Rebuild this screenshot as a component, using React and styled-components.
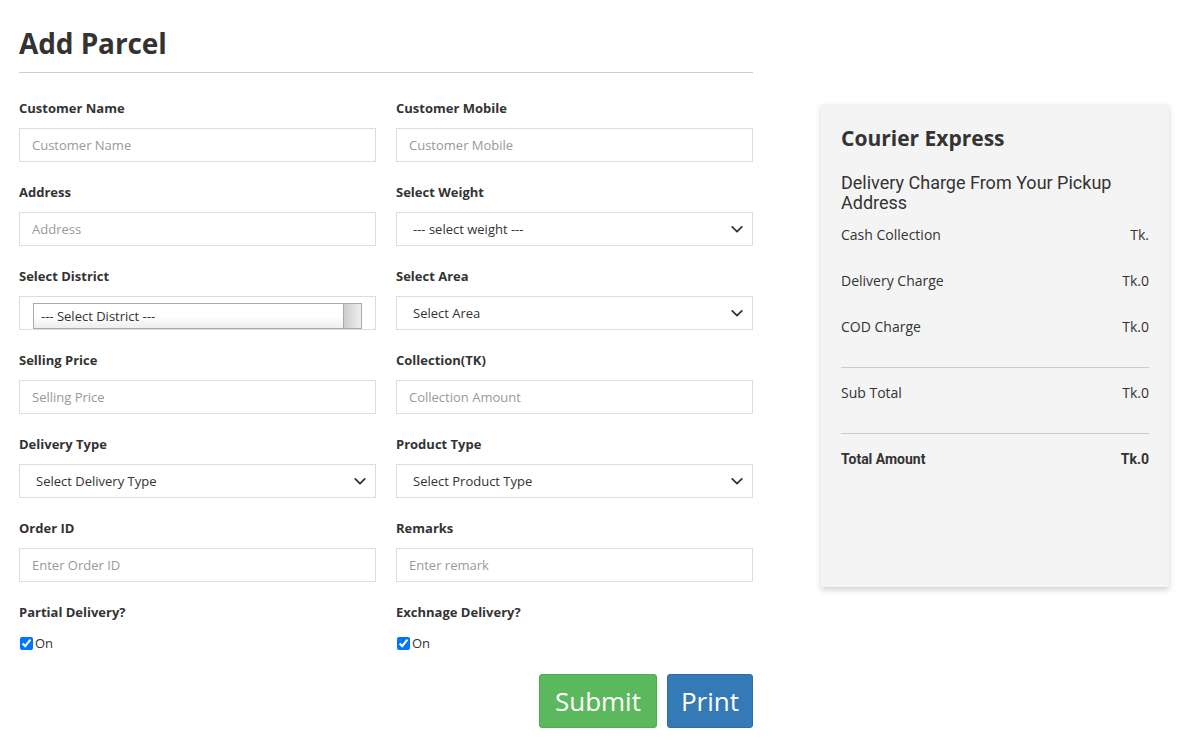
import React from "react";
import styled, { createGlobalStyle } from "styled-components";

const Global = createGlobalStyle`
  html, body { margin: 0; padding: 0; background: #fff; }
  body { font-family: "Open Sans", "Noto Sans", sans-serif; color: #333; }
  * { box-sizing: border-box; }
`;

const Page = styled.div`
  display: flex;
  align-items: flex-start;
  padding: 0 13px 0 19px;
`;

const FormColumn = styled.div`
  width: 734px;
  flex: none;
`;

const Title = styled.h1`
  margin: 0;
  padding-top: 25px;
  font-size: 28px;
  line-height: 36px;
  font-weight: 700;
  color: #333;
  letter-spacing: -0.1px;
`;

const Rule = styled.hr`
  margin: 11px 0 0;
  border: 0;
  border-top: 1px solid #ccc;
`;

const Grid = styled.form`
  display: grid;
  grid-template-columns: 1fr 1fr;
  column-gap: 20px;
  row-gap: 21px;
  margin-top: 26px;
`;

const Field = styled.div`
  display: flex;
  flex-direction: column;
`;

const Label = styled.label`
  font-size: 13px;
  line-height: 18px;
  font-weight: 700;
  color: #333;
  margin-bottom: 11px;
`;

const Input = styled.input`
  height: 34px;
  width: 100%;
  border: 1px solid #ddd;
  padding: 0 12px;
  font-family: inherit;
  font-size: 13px;
  color: #333;
  background: #fff;
  outline: none;
  &::placeholder { color: #999; }
`;

const SelectBox = styled.div`
  height: 34px;
  border: 1px solid #ddd;
  display: flex;
  align-items: center;
  padding: 0 8px 0 16px;
  font-size: 13px;
  color: #333;
  background: #fff;
`;

const Chevron = styled.svg`
  margin-left: auto;
  width: 14px;
  height: 14px;
`;

const ComboWrap = styled.div`
  height: 34px;
  border: 1px solid #ddd;
  padding: 6px 13px 0 13px;
  display: flex;
`;

const Combo = styled.div`
  flex: 1;
  height: 26px;
  border: 1px solid #aaa;
  background: linear-gradient(#fff 0%, #fff 50%, #eee 100%);
  display: flex;
  align-items: center;
  padding-left: 7px;
  font-size: 13px;
  color: #333;
`;

const ComboArrow = styled.div`
  margin-left: auto;
  width: 18px;
  align-self: stretch;
  border-left: 1px solid #aaa;
  background: linear-gradient(to right, #ccc, #eee);
`;

const CheckLine = styled.label`
  display: flex;
  align-items: center;
  height: 22px;
  font-size: 13px;
  color: #333;
  gap: 2px;
`;

const Check = styled.input`
  margin: 0 0 0 1px;
  width: 13px;
  height: 13px;
`;

const Actions = styled.div`
  display: flex;
  justify-content: flex-end;
  gap: 10px;
  margin-top: 20px;
`;

const Button = styled.button`
  height: 54px;
  padding: 0 ${(p) => p.$pad}px;
  border: 1px solid ${(p) => p.$border};
  background: ${(p) => p.$bg};
  color: #fff;
  font-family: inherit;
  font-size: 26px;
  border-radius: 3px;
  cursor: pointer;
`;

const Card = styled.aside`
  margin-left: 68px;
  margin-top: 104px;
  width: 348px;
  height: 483px;
  flex: none;
  background: #f4f4f4;
  box-shadow: 0 3px 6px rgba(0, 0, 0, 0.18);
  padding: 20px 20px;
`;

const CardTitle = styled.h2`
  margin: 0;
  font-size: 21px;
  line-height: 28px;
  font-weight: 700;
  color: #333;
`;

const CardSub = styled.h3`
  margin: 21px 0 0;
  font-family: Roboto, "Open Sans", sans-serif;
  font-size: 18px;
  line-height: 20px;
  font-weight: 400;
  color: #333;
`;

const Rows = styled.div`
  margin-top: 12px;
  display: flex;
  flex-direction: column;
`;

const Row = styled.div`
  display: flex;
  justify-content: space-between;
  font-size: 14px;
  line-height: 20px;
  margin-bottom: 26px;
  font-family: ${(p) => (p.$bold ? 'Roboto, "Open Sans", sans-serif' : "inherit")};
  font-weight: ${(p) => (p.$bold ? 700 : 400)};
  color: #333;
`;

const Divider = styled.hr`
  margin: 4px 0 15px;
  border: 0;
  border-top: 1px solid #ccc;
`;

const ChevronIcon = () => (
  <Chevron viewBox="0 0 16 16" fill="none">
    <path d="M2.5 5.5L8 11l5.5-5.5" stroke="#333" strokeWidth="2" strokeLinecap="round" strokeLinejoin="round" />
  </Chevron>
);

const TextField = ({ label, placeholder }) => (
  <Field>
    <Label>{label}</Label>
    <Input placeholder={placeholder} />
  </Field>
);

const SelectField = ({ label, value }) => (
  <Field>
    <Label>{label}</Label>
    <SelectBox>
      {value}
      <ChevronIcon />
    </SelectBox>
  </Field>
);

const CheckField = ({ label }) => (
  <Field>
    <Label>{label}</Label>
    <CheckLine>
      <Check type="checkbox" defaultChecked />
      On
    </CheckLine>
  </Field>
);

export default function App() {
  return (
    <>
      <Global />
      <Page>
        <FormColumn>
          <Title>Add Parcel</Title>
          <Rule />
          <Grid onSubmit={(e) => e.preventDefault()}>
            <TextField label="Customer Name" placeholder="Customer Name" />
            <TextField label="Customer Mobile" placeholder="Customer Mobile" />
            <TextField label="Address" placeholder="Address" />
            <SelectField label="Select Weight" value="--- select weight ---" />
            <Field>
              <Label>Select District</Label>
              <ComboWrap>
                <Combo>
                  --- Select District ---
                  <ComboArrow />
                </Combo>
              </ComboWrap>
            </Field>
            <SelectField label="Select Area" value="Select Area" />
            <TextField label="Selling Price" placeholder="Selling Price" />
            <TextField label="Collection(TK)" placeholder="Collection Amount" />
            <SelectField label="Delivery Type" value="Select Delivery Type" />
            <SelectField label="Product Type" value="Select Product Type" />
            <TextField label="Order ID" placeholder="Enter Order ID" />
            <TextField label="Remarks" placeholder="Enter remark" />
            <CheckField label="Partial Delivery?" />
            <CheckField label="Exchnage Delivery?" />
          </Grid>
          <Actions>
            <Button $bg="#5cb85c" $border="#4cae4c" $pad={15}>Submit</Button>
            <Button $bg="#337ab7" $border="#2e6da4" $pad={13}>Print</Button>
          </Actions>
        </FormColumn>
        <Card>
          <CardTitle>Courier Express</CardTitle>
          <CardSub>Delivery Charge From Your Pickup Address</CardSub>
          <Rows>
            <Row><span>Cash Collection</span><span>Tk.</span></Row>
            <Row><span>Delivery Charge</span><span>Tk.0</span></Row>
            <Row><span>COD Charge</span><span>Tk.0</span></Row>
            <Divider />
            <Row><span>Sub Total</span><span>Tk.0</span></Row>
            <Divider />
            <Row $bold><span>Total Amount</span><span>Tk.0</span></Row>
          </Rows>
        </Card>
      </Page>
    </>
  );
}
